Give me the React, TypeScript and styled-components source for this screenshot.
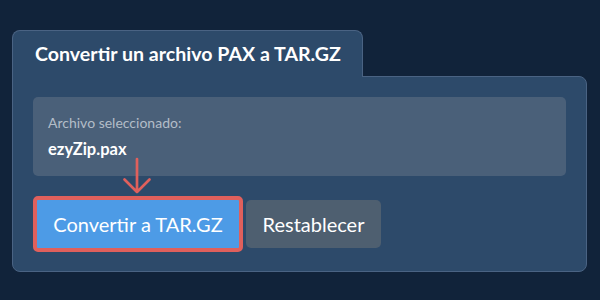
import React from "react";
import styled, { createGlobalStyle } from "styled-components";

const Global = createGlobalStyle`
  html, body { margin: 0; padding: 0; }
  body {
    background: #11233a;
    font-family: Lato, "Noto Sans", sans-serif;
    width: 600px;
    height: 300px;
    overflow: hidden;
  }
`;

const Page = styled.div`
  padding: 30px 13px 0 12px;
`;

const Tab = styled.div`
  position: relative;
  z-index: 1;
  box-sizing: border-box;
  width: 351px;
  height: 47px;
  margin-bottom: -1px;
  padding: 11px 22px 0;
  background: #2d4a6a;
  border: 1px solid #4a6383;
  border-bottom: none;
  border-radius: 8px 8px 0 0;
`;

const Title = styled.h1`
  margin: 0;
  font-size: 19.6px;
  line-height: 24px;
  font-weight: 700;
  color: #ffffff;
  white-space: nowrap;
`;

const Panel = styled.div`
  position: relative;
  box-sizing: border-box;
  height: 196px;
  padding: 20px;
  background: #2d4a6a;
  border: 1px solid #4a6383;
  border-radius: 0 8px 8px 8px;
`;

const FileBox = styled.div`
  box-sizing: border-box;
  height: 79px;
  padding: 17px 15px 0;
  background: #4a6079;
  border-radius: 5px;
`;

const Label = styled.div`
  font-size: 14px;
  line-height: 18px;
  color: #b3bdc8;
`;

const FileName = styled.div`
  margin-top: 7px;
  font-size: 16.5px;
  line-height: 20px;
  font-weight: 700;
  color: #ffffff;
`;

const Actions = styled.div`
  display: flex;
  align-items: center;
  margin-top: 20px;
`;

const Button = styled.button<{ $primary?: boolean }>`
  box-sizing: border-box;
  display: flex;
  align-items: center;
  justify-content: center;
  padding: 0;
  font-family: Lato, "Noto Sans", sans-serif;
  font-size: 20px;
  color: #ffffff;
  cursor: pointer;
  border-radius: 5px;
  width: ${(p) => (p.$primary ? "210px" : "135px")};
  height: ${(p) => (p.$primary ? "56px" : "48px")};
  margin-left: ${(p) => (p.$primary ? "0" : "3px")};
  background: ${(p) => (p.$primary ? "#4d9be6" : "#4e5f70")};
  border: ${(p) => (p.$primary ? "4px solid #e0605c" : "none")};
`;

const Arrow = styled.svg`
  position: absolute;
  left: 110px;
  top: 81px;
  overflow: visible;
`;

export default function App() {
  return (
    <>
      <Global />
      <Page>
        <Tab>
          <Title>Convertir un archivo PAX a TAR.GZ</Title>
        </Tab>
        <Panel>
          <FileBox>
            <Label>Archivo seleccionado:</Label>
            <FileName>ezyZip.pax</FileName>
          </FileBox>
          <Actions>
            <Button $primary>Convertir a TAR.GZ</Button>
            <Button>Restablecer</Button>
          </Actions>
          <Arrow width="28" height="36" viewBox="0 0 28 36">
            <path
              d="M14 1 V34 M1.5 21.5 L14 34 L26.5 21.5"
              fill="none"
              stroke="#e0605c"
              strokeWidth="2.7"
              strokeLinecap="round"
              strokeLinejoin="round"
            />
          </Arrow>
        </Panel>
      </Page>
    </>
  );
}
